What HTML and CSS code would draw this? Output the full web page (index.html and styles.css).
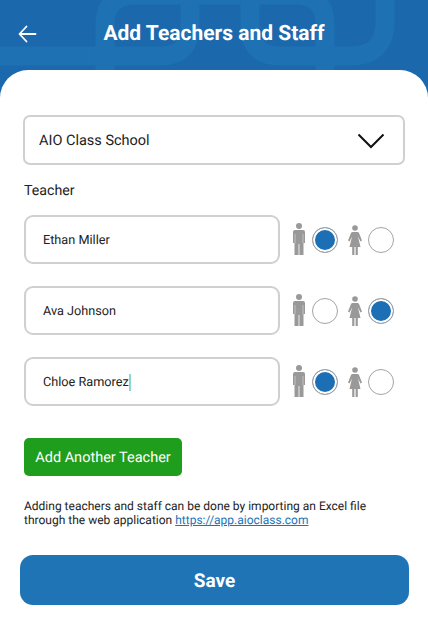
FILE: index.html
```html
<!DOCTYPE html>
<html lang="en">
<head>
<meta charset="utf-8">
<title>Add Teachers and Staff</title>
<link rel="stylesheet" href="styles.css">
</head>
<body>
<div class="screen">
  <header class="topbar">
    <svg class="pattern" width="428" height="80" viewBox="0 0 428 80" fill="none" stroke="#1e71b3" stroke-width="19">
      <path d="M0 56H160Q190 56 190 26V-20"/>
      <path d="M105 80V25Q105 -5 135 -5H295Q325 -5 325 25V80"/>
      <path d="M250 -20V26Q250 56 280 56H350Q385 56 385 21V-20"/>
    </svg>
    <button class="back" aria-label="Back">
      <svg width="20" height="18" viewBox="0 0 20 18" fill="none" stroke="#fff" stroke-width="1.8" stroke-linecap="round" stroke-linejoin="round"><path d="M18.500 9H3M9.500 1.500 2.500 9l7 7.500"/></svg>
    </button>
    <h1>Add Teachers and Staff</h1>
  </header>
  <main class="sheet">
    <div class="select">
      <span>AIO Class School</span>
      <svg width="28" height="16" viewBox="0 0 28 16" fill="none" stroke="#111" stroke-width="2"><path d="M1.500 1.500 14 14 26.500 1.500"/></svg>
    </div>
    <div class="label">Teacher</div>

    <div class="row">
      <div class="field">Ethan Miller</div>
      <div class="genders">
        <svg class="person male" viewBox="0 0 12 32"><circle cx="6" cy="3" r="3"/><path fill-rule="evenodd" d="M2 7H10Q12 7 12 9V20H10.500V32H6.400V21H5.600V32H1.500V20H0V9Q0 7 2 7ZM1.800 11H2.200V20H1.800ZM9.800 11H10.200V20H9.800Z"/></svg>
        <span class="radio on"></span>
        <svg class="person female" viewBox="0 0 14 30"><circle cx="7" cy="3" r="2.800"/><path d="M4.500 7H9.500Q10.500 7 11 8L14 15.500 12.500 16.500 10 11.500 12.500 22H9.800V30H7.600V22H6.400V30H4.200V22H1.500L4 11.500 1.500 16.500 0 15.500 3 8Q3.500 7 4.500 7Z"/></svg>
        <span class="radio"></span>
      </div>
    </div>

    <div class="row">
      <div class="field">Ava Johnson</div>
      <div class="genders">
        <svg class="person male" viewBox="0 0 12 32"><circle cx="6" cy="3" r="3"/><path fill-rule="evenodd" d="M2 7H10Q12 7 12 9V20H10.500V32H6.400V21H5.600V32H1.500V20H0V9Q0 7 2 7ZM1.800 11H2.200V20H1.800ZM9.800 11H10.200V20H9.800Z"/></svg>
        <span class="radio"></span>
        <svg class="person female" viewBox="0 0 14 30"><circle cx="7" cy="3" r="2.800"/><path d="M4.500 7H9.500Q10.500 7 11 8L14 15.500 12.500 16.500 10 11.500 12.500 22H9.800V30H7.600V22H6.400V30H4.200V22H1.500L4 11.500 1.500 16.500 0 15.500 3 8Q3.500 7 4.500 7Z"/></svg>
        <span class="radio on"></span>
      </div>
    </div>

    <div class="row">
      <div class="field">Chloe Ramorez<span class="caret"></span></div>
      <div class="genders">
        <svg class="person male" viewBox="0 0 12 32"><circle cx="6" cy="3" r="3"/><path fill-rule="evenodd" d="M2 7H10Q12 7 12 9V20H10.500V32H6.400V21H5.600V32H1.500V20H0V9Q0 7 2 7ZM1.800 11H2.200V20H1.800ZM9.800 11H10.200V20H9.800Z"/></svg>
        <span class="radio on"></span>
        <svg class="person female" viewBox="0 0 14 30"><circle cx="7" cy="3" r="2.800"/><path d="M4.500 7H9.500Q10.500 7 11 8L14 15.500 12.500 16.500 10 11.500 12.500 22H9.800V30H7.600V22H6.400V30H4.200V22H1.500L4 11.500 1.500 16.500 0 15.500 3 8Q3.500 7 4.500 7Z"/></svg>
        <span class="radio"></span>
      </div>
    </div>

    <button class="add">Add Another Teacher</button>
    <p class="note">Adding teachers and staff can be done by importing an Excel file through the web application <a href="#">https://app.aioclass.com</a></p>
    <button class="save">Save</button>
  </main>
</div>
</body>
</html>
```
FILE: styles.css
```css
* { box-sizing: border-box; }
html, body { margin: 0; padding: 0; }
body { font-family: Roboto, sans-serif; background: #fff; color: #222; text-rendering: geometricPrecision; }
.screen { width: 428px; height: 625px; overflow: hidden; background: #1b69ac; display: flex; flex-direction: column; }
.topbar { position: relative; height: 70px; flex: none; display: flex; align-items: center; justify-content: center; padding-bottom: 2px; }
.pattern { position: absolute; left: 0; top: 0; }
.back { position: absolute; left: 17px; top: 25px; width: 20px; height: 18px; padding: 0; border: 0; background: none; display: flex; }
.topbar h1 { position: relative; margin: 0; font-size: 21px; font-weight: 700; color: #fff; line-height: 26px; }
.sheet { position: relative; flex: 1; background: #fff; border-radius: 28px 28px 0 0; padding: 45px 23px 0 24px; display: flex; flex-direction: column; }
.select { width: 382px; height: 50px; margin-left: -1px; border: 2px solid #d0d0d0; border-radius: 7px; display: flex; align-items: center; justify-content: space-between; padding: 1px 18px 0 14px; font-size: 14.500px; color: #222; }
.select svg { margin-top: 1px; }
.label { margin-top: 17px; font-size: 14.200px; line-height: 18px; color: #222; }
.row { display: flex; align-items: center; height: 49px; margin-top: 22px; }
.label + .row { margin-top: 15px; }
.field { width: 256px; height: 49px; border: 2px solid #d0d0d0; border-radius: 9px; display: flex; align-items: center; padding: 1px 0 0 17px; font-size: 12.700px; color: #222; }
.caret { width: 2px; height: 17px; background: #8fd6cc; }
.genders { display: flex; align-items: center; margin-left: 13px; }
.person { fill: #999; display: block; flex: none; }
.male { width: 12px; height: 32px; margin-top: -1px; }
.female { width: 14px; height: 30px; margin-left: 10px; }
.radio { width: 26px; height: 26px; border-radius: 50%; border: 1px solid #a4a4a4; background: #fff; margin-left: 6px; }
.male + .radio { margin-left: 7px; }
.radio.on { background: #1c6fb4; box-shadow: inset 0 0 0 2px #fff; }
.add { align-self: flex-start; margin-top: 32px; width: 158px; height: 38px; padding: 1px 0 0; border: 0; border-radius: 5px; background: #1f9d1c; color: #fff; font: 400 14.500px Roboto, sans-serif; text-rendering: geometricPrecision; }
.note { margin: 23px 0 0; width: 381px; font-size: 12px; line-height: 14px; color: #222; }
.note a { color: #2173b5; }
.save { margin: 28px 0 0 -4px; width: 389px; height: 50px; border: 0; border-radius: 13px; background: #1f74b6; color: #fff; font: 700 19px Roboto, sans-serif; text-rendering: geometricPrecision; }
```
